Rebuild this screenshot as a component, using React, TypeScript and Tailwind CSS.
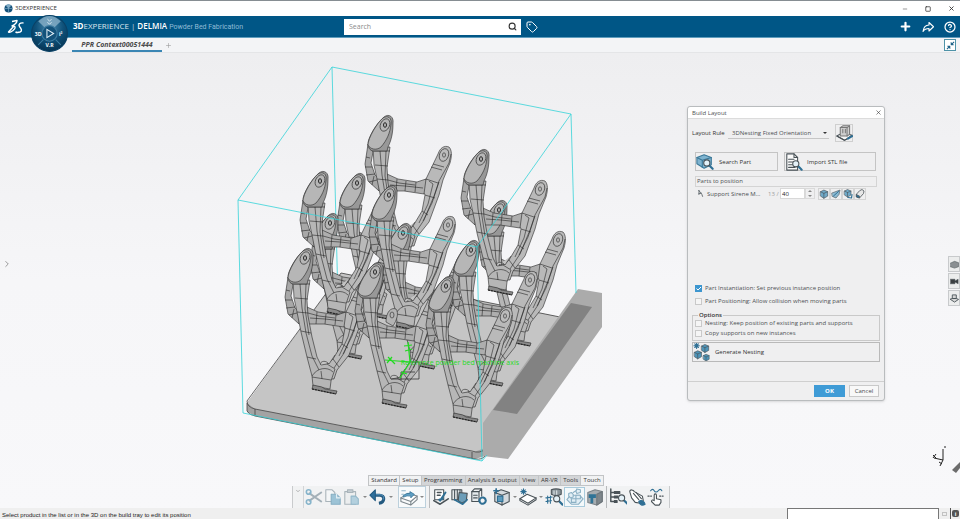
import type { ReactNode } from 'react'
import { Minus, Square, X, Plus, Search, Tag, CircleHelp, ChevronRight, ChevronDown } from 'lucide-react'

const BLUE = '#2f6f94'
const DARK = '#4a5358'

const TABS = ['Standard', 'Setup', 'Programming', 'Analysis & output', 'View', 'AR-VR', 'Tools', 'Touch']
const ACTIVE_TABS = ['Standard', 'Setup', 'Touch']

// anchor point of every part on the tray, back to front
const PARTS = [
  { x: 385, y: 125 },
  { x: 499, y: 210 },
  { x: 481, y: 159 },
  { x: 357, y: 183, noArm: true },
  { x: 330, y: 223 },
  { x: 403, y: 233 },
  { x: 471, y: 250 },
  { x: 320, y: 181 },
  { x: 389, y: 195 },
  { x: 305, y: 258 },
  { x: 375, y: 272 },
  { x: 446, y: 286 },
]

function Ico({ children, size = 'size-[18px]' }: { children: ReactNode; size?: string }) {
  return (
    <svg viewBox="0 0 20 20" className={`${size} shrink-0`} fill="none" stroke={DARK}
      strokeWidth="1.2" strokeLinejoin="round" strokeLinecap="round" aria-hidden="true">
      {children}
    </svg>
  )
}

function Lens({ x = 12, y = 12 }: { x?: number; y?: number }) {
  return (
    <g transform={`translate(${x} ${y})`}>
      <path d="M2.5 2.5 6.500 6.500" stroke={BLUE} strokeWidth="2.4" />
      <circle r="3.4" fill="#e4f1f8" stroke={DARK} />
    </g>
  )
}

function Cube({ x = 0, y = 0, s = 1, fill = '#6fa9c8' }: { x?: number; y?: number; s?: number; fill?: string }) {
  return (
    <g transform={`translate(${x} ${y}) scale(${s})`}>
      <path d="M1 4 7 1l7 3v8l-7 4-6-4z" fill={fill} stroke={DARK} />
      <path d="m1 4 6 3 7-3M7 7v9" stroke={DARK} />
    </g>
  )
}

const CutIcon = () => (
  <Ico>
    <path d="m5 6 13 9M5 14 18 5" stroke="#a3b0b8" strokeWidth="2.200" />
    <circle cx="4" cy="4.500" r="2.5" stroke="#86b4cb" strokeWidth="1.800" />
    <circle cx="4" cy="15.500" r="2.5" stroke="#86b4cb" strokeWidth="1.800" />
  </Ico>
)
const CopyIcon = () => (
  <Ico>
    <path d="M2 2h7l3 3v10H2z" fill="#f4f6f7" stroke="#a9b4ba" />
    <path d="M8 7h6l4 4v7H8z" fill="#9cc3d6" stroke="#86afc3" />
    <path d="M14 7v4h4" stroke="#e6f1f6" />
  </Ico>
)
const PasteIcon = () => (
  <Ico>
    <path d="M2 4h12v14H2z" fill="#eceeef" stroke="#a9b4ba" />
    <path d="M5 2h6v3H5z" fill="#c4cdd2" stroke="#a9b4ba" />
    <path d="M9 9h5l3 3v6H9z" fill="#b3d0de" stroke="#93b8ca" />
  </Ico>
)
const UndoIcon = () => (
  <Ico>
    <path d="M5 8h7c6 0 6 8-1 9" stroke="#245a80" strokeWidth="3.400" strokeLinecap="butt" />
    <path d="M5 7.500h7c4 0 5 3 4 5" stroke="#5d9cc4" strokeWidth="1" />
    <path d="M7 2 1 8l6 6z" fill="#2f6f9c" stroke="#245a80" />
  </Ico>
)
const SetupIcon = () => (
  <Ico>
    <path d="m1 11 8-5 10 3-7 6z" fill="#fff" stroke="#7c868c" />
    <path d="M1 11v4l11 4 7-6V9M12 15v4" stroke="#7c868c" />
    <path d="M4 8q4-3 7-2V4l5 3-4 4V9Q8 8 4 10z" fill="#5f9fc4" stroke={BLUE} strokeWidth="0.800" />
    <path d="M2 3h4M2 7h2" stroke="#8fb4c8" />
  </Ico>
)
const LayoutIcon = () => (
  <Ico>
    <path d="M3 2h10v11H3z" fill="#fff" />
    <path d="M6 5h4M6 8h3M2 14l7 4 9-6" strokeWidth="1.800" />
    <path d="m8 13 4-1M9 14l6-9" stroke={BLUE} strokeWidth="2.200" />
  </Ico>
)
const SupportIcon = () => (
  <Ico>
    <path d="M1 2h11v11H1z" fill="#e6e9eb" />
    <path d="M4 2v11M7 2v11M10 2v11" />
    <path d="m9 5 9 1-1 8-5 3-4-3z" fill="#6c9db8" />
    <path d="m4 13 9 5 5-5" stroke={BLUE} strokeWidth="1.800" />
  </Ico>
)
const ProcessIcon = () => (
  <Ico>
    <path d="M2 4v11h8V4z" fill="#e6eaec" />
    <path d="m2 4 3-3h8l-3 3M13 1v8M4 8h4M4 11h4" />
    <circle cx="14" cy="14" r="3.500" stroke={BLUE} strokeWidth="2.400" strokeDasharray="3 1.200" />
  </Ico>
)
const MachineIcon = () => (
  <Ico>
    <path d="m2 5 7-3 9 3v10l-8 4-8-4z" fill="#d4dade" />
    <path d="m2 5 8 3 8-3M10 8v11" />
    <path d="M5 9h6v6H5z" fill="#5b9bbd" stroke={BLUE} />
    <path d="M1 3h5M3.500 1v5" stroke={BLUE} strokeWidth="1.800" />
  </Ico>
)
const TrayIcon = () => (
  <Ico>
    <path d="m1 12 8-5 10 4-9 6z" fill="#fff" />
    <path d="M1 12v2l9 5 9-6v-2" />
    <path d="M2 4h6M5 1v6M3 2l4 4M7 2 3 6" stroke={BLUE} strokeWidth="1.200" />
  </Ico>
)
const InspectIcon = () => (
  <Ico>
    <path d="M7 2q5-2 11 0v5q-5 3-11 0z" fill="#8c969c" />
    <path d="M10 3v4M13 3v4" stroke="#dfe5e8" />
    <path d="m1 11 7-1M1 15l6-1M3 9v8M6 9v8" stroke={BLUE} strokeWidth="1.200" />
    <Lens x={13} y={12} />
  </Ico>
)
const NestIcon = () => (
  <Ico>
    <g stroke="#8bb0c4" fill="#e1eef5">
      <path d="m1 13 5 5h8l5-6-4-4H5z" />
      <path d="m3 6 3-1 2 2v3l-3 1-2-2zM11 8h5v4h-5zM12 1l4 1v3l-4 1-1-2zM6 12h5v4H6z" />
      <path d="m8 5 3-2" />
    </g>
  </Ico>
)
const BlockIcon = () => (
  <Ico>
    <path d="m2 5 8-3 8 2v11l-6 4-10-3z" fill="#a6acb0" stroke="#7b8388" />
    <path d="m12 7 6-3v11l-6 4z" fill="#7e868b" stroke="#6d757a" />
    <path d="M3 7h8v4H8v6H5v-6H3z" fill="#2f7396" stroke="none" />
  </Ico>
)
const TreeIcon = () => (
  <Ico>
    <path d="M2 1v14h5M2 5h5M2 10h5" strokeWidth="1.600" />
    <path d="M6 4h6v2H6zM6 9h4v2H6zM6 14h3v2H6z" fill={DARK} />
    <Lens x={14} y={11} />
  </Ico>
)
const PaintIcon = () => (
  <Ico>
    <path d="M2 4c0-3 4-2 5 0l9 5 1 5-3 3-6-1-4-5z" fill="#fff" />
    <path d="m6 6 6 7M9 5l6 7" />
    <path d="M12 15c2-2 6-1 7 3-3 2-6 1-7-3z" fill={BLUE} stroke={BLUE} />
  </Ico>
)
const TouchIcon = () => (
  <Ico>
    <path d="M8 14V8c0-2 2.500-2 2.500 0v4l5 1v3l-2 3H9l-4-4c0-2 1.500-2 3-1" fill="#fff" />
    <path d="M4 3c1.500-2 3-2 4 0s3 2 4.500 0 3-2 4 0" stroke={BLUE} />
    <path d="M1 9h4M14 9h4" strokeDasharray="1.500 1.500" />
  </Ico>
)

function Tool({ label, children }: { label: string; children: ReactNode }) {
  return (
    <button aria-label={label} className="flex w-[19px] items-center justify-center">
      {children}
    </button>
  )
}

function Caret({ label }: { label: string }) {
  return (
    <button aria-label={label} className="flex w-[7px] items-center justify-center">
      <span className="border-x-2 border-t-2 border-x-transparent border-t-[#888]" />
    </button>
  )
}

function Part({ x, y, noArm }: { x: number; y: number; noArm?: boolean }) {
  return (
    <g transform={`translate(${x} ${y})`}>
      {/* outer strand */}
      <path d="M-17 19-20 39-17 56-6 66-5 54-10 50-14 38-12 27z" fill="#a8a8a8" />
      <path d="M-19 32-15 33M-20 42-13 42M-19 50-10 49M-16 57-8 55M-13 60-11 51" />
      {/* right arm */}
      {!noArm && <>
        <path d="M53 29C55 23 59 20 64 22 67 25 67 31 65 38L58 55 54 70 44 97 32 112 29 121 18 121 17 110 28 101 37 86 40 70 35 62 41 54z" fill="#b9b9b9" />
        <path d="M66 29 64 38 54 56 49 71 39 95 29 110M46 42 57 45M48 39 59 42M41 54 53 58M40 70 50 73M37 86 43 90M28 101 34 109M44 56 48 59 43 79 34 98M54 57 47 78 38 96" />
        <ellipse cx="59" cy="30" rx="4.500" ry="6.500" transform="rotate(20 59 30)" fill="#bcbcbc" />
        <ellipse cx="59" cy="30" rx="1.500" ry="2.200" />
      </>}
      {/* cross bar */}
      <path d="M2 49 13 54 32 57 41 54 39 69 19 66 3 66z" fill="#aeaeae" />
      <path d="M5 60 20 61 38 63M12 54 11 66M21 56 20 66M31 57 30 67M3 55 14 58 30 60" />
      {/* stem and foot */}
      <path d="M-12 22-11 40-8 54-4 74 2 99 7 118 8 128 25 131 26 123 30 111 22 106 16 107 12 99 7 79 3 58 2 42 5 22z" fill="#b6b6b6" />
      <path d="M-5 26-3 50 1 75 7 98 14 112M1 26 0 51 4 77M-11 26 5 26M-10 40 3 41M-8 54 3 55M-4 73 6 75M2 99 11 101M7 118C12 110 22 108 28 114M7 119 26 122M16 113 17 121" />
      <path d="M16 107C14 104 20 101 24 106L30 97" fill="#c4c4c4" />
      <path d="M8 127 17 129 20 131 32 133 31 136 7 131z" fill="#8a8a8a" />
      <path d="M7 131 31 136" strokeWidth="1.200" stroke="#222" strokeDasharray="2 1" />
      {/* blade head */}
      <path d="M-1-8C4-12 9-8 8-2 8 6 7 14 3 22L2 26H-12C-17 25-18 19-16 14-13 6-7-3-1-8z" fill="#989898" />
      <path d="M-2-7C3-10 7-7 6-1 5 8 2 15-4 22-9 26-15 24-17 20-17 13-8-2-2-7z" fill="#b6b6b6" />
      <ellipse rx="4.500" ry="6.500" transform="rotate(25)" />
      <ellipse rx="1.500" ry="2.300" strokeWidth="1" />
    </g>
  )
}

function Scene() {
  return (
    <svg viewBox="0 53 960 455" className="absolute inset-0 size-full" role="img" aria-label="Powder bed build tray">
      <path d="M341 273 560 317 484 423 485 456 475 459 255 416 247 412V403z" fill="#a3a3a3" />
      <path d="M341 273 560 317 484 423 485 448 474 452 255 409 247 403z" fill="#c5c5c5" />
      <path d="M341 273 247 401Q247 407 255 409L472 451Q480 454 485 449M247 403V411Q249 415 255 416L475 459Q482 460 485 456V449M255 409V416M472 452V459M341 273 560 317"
        fill="none" stroke="#444" strokeWidth="0.800" />
      <path d="M578 289 602 293V327L508 459 483 456V423z" fill="#ababab" />
      <path d="M571 303 592 307 517 414 493 410z" fill="#828282" />
      <path d="M332 67 338 300" stroke="#35d3d8" strokeWidth="0.800" fill="none" />

      <g fill="none" stroke="#262626" strokeWidth="0.600" strokeLinejoin="round">
        {PARTS.map(p => <Part key={`${p.x}-${p.y}`} {...p} />)}
        <path d="M386 322C386 312 391 307 396 309 399 313 397 320 393 326z" fill="#b4b4b4" />
        <ellipse cx="392" cy="315" rx="2" ry="3" />
      </g>

      <path d="M238 200 332 67 571 114 477 247zM238 200 243 413 482 461 477 247M571 114 576 293M482 461 487 455"
        fill="none" stroke="#35d3d8" strokeWidth="0.800" />

      <path d="M391 379H419V362H410M401 380V372H415" fill="none" stroke="#222" strokeWidth="0.700" />
      <path d="M410 362 408 342M410 362 385 360M410 362 400 378M404 346 412 345M405 351 412 349M388 357 395 364M392 357 387 363M401 372 407 374"
        fill="none" stroke="#1fdc1f" strokeWidth="1.200" />
      <text x="519" y="365" textAnchor="end" fill="#1fdc1f" fontSize="7" fontFamily="Open Sans, sans-serif">
        Reference powder bed machine axis
      </text>

      <path d="M943 460V449M943 460 934 458M943 460 940 466M944 447h2M933 455l3 3M936 454l-3 4M939 462l3 2"
        fill="none" stroke="#222" />
      <path d="M952 470 960 462V468L956 473z" fill="#6c6c6c" />
    </svg>
  )
}

function Check({ label, checked = false }: { label: string; checked?: boolean }) {
  return (
    <label className="flex items-center gap-[3px]">
      <input type="checkbox" defaultChecked={checked}
        className="peer size-[7px] shrink-0 appearance-none border border-[#c9c9c9] bg-[#f5f5f5]
          checked:border-[#3d96cf] checked:bg-[#3d96cf]" />
      <svg viewBox="0 0 7 7" className="-ml-[10px] hidden size-[7px] shrink-0 peer-checked:block" aria-hidden="true">
        <path d="m1.500 3.500 1.500 1.500 3-3" fill="none" stroke="#fff" />
      </svg>
      <span>{label}</span>
    </label>
  )
}

function BuildLayout() {
  return (
    <section aria-label="Build Layout"
      className="absolute right-[75px] top-[53px] flex h-[295px] w-[198px] flex-col rounded-[3px] border
        border-[#b9bcbe] bg-[#efeff0] text-[6px] leading-[8px] text-[#4c4f52] shadow-sm">
      <header className="flex h-3 shrink-0 items-center justify-between rounded-t-[3px] border-b border-[#dcdcdc] bg-white pl-1 pr-[2px]">
        <h2>Build Layout</h2>
        <button aria-label="Close"><X className="size-[7px] text-[#333]" /></button>
      </header>

      <div className="flex grow flex-col px-1">
        <div className="mt-[5px] flex h-[18px] items-center">
          <label htmlFor="rule" className="w-9 whitespace-nowrap text-[#333]">Layout Rule</label>
          <div className="flex h-3 w-[101px] items-center border-b border-[#c6c6c6]">
            <select id="rule" className="h-3 w-full appearance-none pl-1">
              <option>3DNesting Fixed Orientation</option>
            </select>
            <span className="mr-[2px] border-x-2 border-t-2 border-x-transparent border-t-[#333]" />
          </div>
          <button aria-label="Edit rule"
            className="ml-[6px] flex size-[18px] items-center justify-center border border-[#cfcfcf]">
            <Ico size="size-[17px]">
              <path d="m1 13 7-4 11 3-9 6z" fill="#f6f6f6" />
              <path d="m5 3 3-2h8v10l-3 2H5z" fill="#cfcfcf" stroke="#777" />
              <path d="M5 3h8v10M13 3l3-2M8 5v4M11 5v4" stroke="#777" />
              <path d="m1 13 9 5 4-2" />
              <path d="m14 16 5-3" stroke={BLUE} strokeWidth="2.400" />
            </Ico>
          </button>
        </div>

        <div className="mt-[10px] flex gap-[6px] pl-[3px]">
          <button className="flex h-[19px] w-[83px] items-center gap-[5px] border border-[#c4c4c4] text-[#333]">
            <Ico>
              <path d="m1 5 8-3 8 3v8l-8 4-8-5z" fill="#7eb3cf" stroke="#3b7898" />
              <path d="m1 5 6 3 10-3M7 8v8" stroke="#3b7898" />
              <Lens x={12} y={11} />
            </Ico>
            Search Part
          </button>
          <button className="flex h-[19px] w-[92px] items-center gap-[4px] border border-[#c4c4c4] text-[#333]">
            <Ico>
              <path d="M2 1h8l4 4v14H2z" fill="#fafafa" />
              <path d="M10 1v4h4M4 7h6M4 10h5M4 13h5M4 16h7" />
              <Lens x={12} y={12} />
            </Ico>
            Import STL file
          </button>
        </div>

        <h3 className="ml-[3px] mr-[3px] mt-[5px] h-[11px] border border-[#d4d4d4] px-px">Parts to position</h3>

        <div className="mt-px flex h-[11px] items-center pl-[5px]">
          <span className="w-[10px]">
            <Ico size="size-[8px]"><path d="M4 1c4 4 8 7 10 15M5 1v9M4 10l6-2" strokeWidth="2" /></Ico>
          </span>
          <span className="w-[61px] whitespace-nowrap">Support Sirene M...</span>
          <span className="w-3 whitespace-nowrap text-[#a0a0a0]">13 /</span>
          <input aria-label="Quantity" defaultValue="40" className="h-[11px] w-[25px] border border-[#d8d8d8] bg-white px-px text-[#222]" />
          <button aria-label="Step" className="flex h-[11px] w-[10px] flex-col items-center justify-center gap-[3px] border border-[#dadada]">
            <span className="border-x-2 border-b-2 border-x-transparent border-b-[#888]" />
            <span className="border-x-2 border-t-2 border-x-transparent border-t-[#888]" />
          </button>
          <div className="ml-[3px] flex">
            <button aria-label="Add instance" className="flex size-3 items-center justify-center border border-[#d4d4d4]">
              <Ico size="size-[10px]"><Cube x={2} y={1} s={1.1} /></Ico>
            </button>
            <button aria-label="Move instance" className="flex size-3 items-center justify-center border border-[#d4d4d4]">
              <Ico size="size-[10px]">
                <path d="m2 8 8-3 8-3-2 9-6 7-7-3z" fill="#8dbbd3" />
                <path d="m5 14 10-9" stroke={BLUE} strokeWidth="2" />
              </Ico>
            </button>
            <button aria-label="Replace instance" className="flex size-3 items-center justify-center border border-[#d4d4d4]">
              <Ico size="size-[10px]"><Cube x={2} y={0} /><path d="m10 17 7 1 1-7" stroke={BLUE} strokeWidth="2.400" /></Ico>
            </button>
            <button aria-label="Erase instance" className="flex size-3 items-center justify-center border border-[#d4d4d4]">
              <Ico size="size-[10px]">
                <path d="m10 3 4-2 4 3-1 5-8 9-6-2v-5z" fill="#e7e7e7" strokeWidth="1.600" />
                <path d="m3 11 6 3v4l-6-2z" fill={BLUE} />
              </Ico>
            </button>
          </div>
        </div>

        <div className="mb-[6px] mt-auto flex flex-col gap-[5px] pl-[3px]">
          <Check label="Part Instantiation: Set previous instance position" checked />
          <Check label="Part Positioning: Allow collision when moving parts" />
        </div>

        <fieldset className="flex flex-col gap-[2px] border border-[#c9c9c9] pb-[3px] pl-[2px]">
          <legend className="ml-[3px] px-px font-semibold text-[#333]">Options</legend>
          <Check label="Nesting: Keep position of existing parts and supports" />
          <Check label="Copy supports on new instances" />
        </fieldset>

        <button className="mt-px flex h-5 items-center gap-1 border border-[#b9b9b9] text-[#333]">
          <Ico>
            <Cube x={9} y={1} s={0.6} fill="#4d94b8" />
            <Cube x={1} y={8} s={0.6} fill="#4d94b8" />
            <Cube x={11} y={12} s={0.5} fill="#4d94b8" />
            <path d="M1 3h6M4 0v6M2 1l4 4M6 1 2 5" stroke={BLUE} strokeWidth="1.200" />
          </Ico>
          Generate Nesting
        </button>
      </div>

      <footer className="mt-[19px] flex h-[19px] shrink-0 items-center justify-end gap-1 border-t border-[#cfcfcf] px-[5px]">
        <button className="h-3 w-[31px] bg-[#3f9bd6] font-bold text-white">OK</button>
        <button className="h-3 w-[30px] border border-[#c9c9c9] bg-[#f8f8f8]">Cancel</button>
      </footer>
    </section>
  )
}

function ActionBar() {
  return (
    <div className="absolute bottom-0 left-[292px] flex w-[378px] flex-col text-[6px] text-[#333]">
      <div role="tablist" className="ml-[76px] flex h-[11px] w-[236px]">
        {TABS.map(t => (
          <button key={t} role="tab" aria-selected={t === 'Setup'}
            className={`grow whitespace-nowrap border border-l-0 border-[#c2c4c6] px-[2px] first:border-l
              ${ACTIVE_TABS.includes(t) ? 'bg-[#f1f2f3]' : 'bg-[#d3d5d7]'}`}>
            {t}
          </button>
        ))}
      </div>
      <div role="toolbar" className="flex h-[22px] items-stretch border-x border-[#c9cbcd] bg-[#f1f2f3]">
        <button aria-label="Collapse" className="flex w-[11px] shrink-0 justify-center border-r border-[#d2d4d6] pt-[2px]">
          <ChevronDown className="size-[6px] text-[#777]" />
        </button>
        <div className="flex">
          <Tool label="Cut"><CutIcon /></Tool>
          <Tool label="Copy"><CopyIcon /></Tool>
          <Tool label="Paste"><PasteIcon /></Tool>
          <Caret label="Paste options" />
          <Tool label="Undo"><UndoIcon /></Tool>
          <Caret label="Undo history" />
        </div>
        <div className="ml-1 mr-[3px] flex border border-[#bcd0dc] bg-[#f8fafb]">
          <Tool label="Setup"><SetupIcon /></Tool>
          <Caret label="Setup options" />
        </div>
        <div className="flex border-l border-[#b8babc] pl-px">
          <Tool label="Build layout"><LayoutIcon /></Tool>
          <Tool label="Supports"><SupportIcon /></Tool>
          <Tool label="Process"><ProcessIcon /></Tool>
        </div>
        <div className="flex pl-1">
          <Tool label="Machine"><MachineIcon /></Tool>
          <Caret label="Machine options" />
          <Tool label="Tray"><TrayIcon /></Tool>
          <Caret label="Tray options" />
          <Tool label="Inspect"><InspectIcon /></Tool>
        </div>
        <div className="my-px ml-px flex border border-[#a9cbdc] bg-[#f4f9fb]">
          <Tool label="Nesting"><NestIcon /></Tool>
        </div>
        <Tool label="Block"><BlockIcon /></Tool>
        <div className="ml-[2px] flex border-l border-[#b8babc] pl-px">
          <Tool label="Tree"><TreeIcon /></Tool>
          <Tool label="Paint"><PaintIcon /></Tool>
          <Tool label="Touch"><TouchIcon /></Tool>
        </div>
      </div>
    </div>
  )
}

function Compass() {
  return (
    <svg viewBox="0 0 36 36" className="absolute left-[31px] top-[-1px] z-10 size-[37px]" role="img" aria-label="Compass">
      <defs>
        <radialGradient id="ball" cx="50%" cy="30%" r="75%">
          <stop offset="0" stopColor="#4c88ab" />
          <stop offset="0.500" stopColor="#0f527b" />
          <stop offset="1" stopColor="#052f4c" />
        </radialGradient>
      </defs>
      <circle cx="18" cy="18" r="17.500" fill="url(#ball)" stroke="#0a4166" />
      <path d="M7 6Q18-4 29 6L23 12Q18 8 13 12z" fill="#82abc4" opacity="0.850" />
      <circle cx="18" cy="18" r="7.500" fill="#13527a" stroke="#3f7da2" />
      <path d="m15.500 14 6.500 4-6.500 4z" fill="none" stroke="#e5f1f8" />
      <path d="m7 29 5-5M29 29l-5-5" stroke="#3d7ea3" />
      <path d="M16 4l2 2 2-2M16 7l2 2 2-2" fill="none" stroke="#e5f1f8" strokeWidth="0.800" />
      <g fill="#fff" fontSize="5" fontWeight="700" fontFamily="Open Sans, sans-serif" textAnchor="middle">
        <text x="7" y="20">3D</text>
        <text x="29" y="20">i²</text>
        <text x="18" y="31">V.R</text>
      </g>
    </svg>
  )
}

export default function App() {
  return (
    <div className="flex h-screen flex-col overflow-hidden bg-[#f2f3f5] font-['Open_Sans','Noto_Sans',sans-serif]">
      <div className="flex h-4 shrink-0 items-center border-t border-[#868d92] bg-white px-1 text-[#333]">
        <svg viewBox="0 0 10 10" className="size-[9px]" aria-hidden="true">
          <circle cx="5" cy="5" r="4.500" fill="#14517a" />
          <path d="M2 2Q5-1 8 2L5 5z" fill="#7fabc6" />
          <path d="M1 5h8M5 1v8" stroke="#7fabc6" strokeWidth="0.700" />
        </svg>
        <span className="ml-[2px] text-[6px]">3DEXPERIENCE</span>
        <div className="ml-auto flex gap-[17px] pr-px">
          <button aria-label="Minimize"><Minus className="size-[6px]" /></button>
          <button aria-label="Maximize"><Square className="size-[6px]" strokeWidth={3} /></button>
          <button aria-label="Close window"><X className="size-[7px]" strokeWidth={3} /></button>
        </div>
      </div>

      <header className="relative flex h-[22px] shrink-0 items-center border-b border-[#5f9dbd] bg-[#005686] text-white">
        <svg viewBox="0 0 18 16" className="ml-[7px] h-4 w-[18px]" fill="none" stroke="#fff" strokeWidth="1.400"
          strokeLinejoin="round" aria-label="Dassault Systèmes" role="img">
          <path d="M5 2.500 10 1.500C10 4 8 5.500 5 7 9 6.500 9 9 6 11.500 4 13 2 13.500 1.500 13L7 7" />
          <path d="M16.500 4C13 3.500 11 5.500 12.500 7.500 14.500 10 15.500 12 13 13 11.500 13.500 9.500 13.500 8.500 13" />
        </svg>
        <Compass />
        <h1 className="ml-12 flex items-baseline gap-[2px] whitespace-nowrap text-[8px] leading-none">
          <span><b>3D</b><span className="opacity-85">EXPERIENCE</span></span>
          <span className="opacity-70">|</span>
          <b className="font-semibold">DELMIA</b>
          <span className="font-['Roboto',sans-serif] text-[7px] text-[#8fbcd6]">Powder Bed Fabrication</span>
        </h1>
        <label className="absolute left-[344px] flex h-4 w-[177px] items-center bg-white pl-[5px] pr-1">
          <input type="search" aria-label="Search" placeholder="Search"
            className="w-full pt-px text-[7px] text-[#444] placeholder:text-[#8b8b8b]" />
          <Search className="size-[9px] shrink-0 text-[#333]" strokeWidth={3} />
        </label>
        <button aria-label="Tags" className="absolute left-[526px]"><Tag className="size-3" /></button>
        <div className="ml-auto flex items-center gap-[10px] pr-1">
          <button aria-label="Add"><Plus className="size-[13px]" strokeWidth={4} /></button>
          <button aria-label="Share">
            <svg viewBox="0 0 24 24" className="size-3" fill="none" stroke="currentColor" strokeWidth="2.200" strokeLinejoin="round" aria-hidden="true">
              <path d="M14 3v5C7 8 3 13 2 21c3-5 7-6 12-6v5l9-8.500z" />
            </svg>
          </button>
          <button aria-label="Help"><CircleHelp className="size-3" strokeWidth={2.5} /></button>
        </div>
      </header>

      <nav className="flex h-[15px] shrink-0 items-stretch border-b border-[#e4e5e7] bg-[#f3f4f6]">
        <a href="#context"
          className="ml-[72px] flex w-[90px] items-center justify-center border-b-2 border-[#3a86b4]
            whitespace-nowrap pt-[2px] text-[7px] font-bold italic text-[#4a4a4a]">
          PPR Context00051444
        </a>
        <button aria-label="New tab" className="ml-[3px]"><Plus className="size-[7px] text-[#999]" /></button>
        <button aria-label="Exit full view" className="ml-auto mr-1 mt-px flex size-3 items-center justify-center border border-[#4f93a8] bg-white">
          <svg viewBox="0 0 10 10" className="size-[9px]" fill="#1e6288" stroke="#1e6288" aria-hidden="true">
            <path d="M5.500 1.500v3h3zM4.500 8.500v-3h-3z" strokeWidth="0.500" />
            <path d="M6.500 3.500 9 1M3.500 6.500 1 9" strokeWidth="1.200" />
          </svg>
        </button>
      </nav>

      <main className="relative min-h-0 grow bg-linear-to-b from-[#eeeef0] via-[#f6f6f8] to-[#f8f8fa]">
        <Scene />
        <button aria-label="Open left panel" className="absolute left-[2px] top-[206px] flex text-[#888]">
          <ChevronRight className="size-[10px]" />
        </button>
        <div className="absolute right-0 top-[203px] flex flex-col gap-px">
          <button aria-label="Views" className="flex h-4 w-3 items-center justify-center border border-[#c8cacc] bg-[#eceded]">
            <Ico size="size-[9px]"><path d="m1 7 9-4 9 3v9l-9 3-9-3z" fill="#8a8f92" /></Ico>
          </button>
          <button aria-label="Camera" className="flex h-4 w-3 items-center justify-center border border-[#c8cacc] bg-[#eceded]">
            <Ico size="size-[9px]"><path d="M1 5h10v4l7-4v10l-7-4v4H1z" fill="#3c4043" /></Ico>
          </button>
          <button aria-label="Rules" className="flex h-4 w-3 items-center justify-center border border-[#c8cacc] bg-[#eceded]">
            <Ico size="size-[9px]"><path d="M6 2h8v8H6zM1 12l9 6 9-6-5-2H6z" fill="#d5d5d5" strokeWidth="2" /></Ico>
          </button>
        </div>
        <BuildLayout />
        <ActionBar />
      </main>

      <footer className="flex h-[11px] shrink-0 items-center bg-[#efefef] font-['Liberation_Sans',sans-serif] text-[6px] text-[#222]">
        <p className="pl-[2px] pt-[3px]">Select product in the list or in the 3D on the build tray to edit its position</p>
        <input aria-label="Power input" className="ml-auto h-[11px] w-[152px] border border-b-0 border-[#777] bg-white px-1" />
        <button aria-label="Messages" className="flex h-[11px] w-[11px] items-center justify-center">
          <span className="h-1 w-[5px] border border-[#c2c2c2]" />
        </button>
        <button aria-label="Information" className="flex h-[11px] w-[10px] items-center justify-center border-l border-[#555]">
          <span className="flex h-[7px] w-[7px] items-center justify-center rounded-[2px] bg-[#555] text-[6px] font-bold leading-none text-white">i</span>
        </button>
      </footer>
    </div>
  )
}
